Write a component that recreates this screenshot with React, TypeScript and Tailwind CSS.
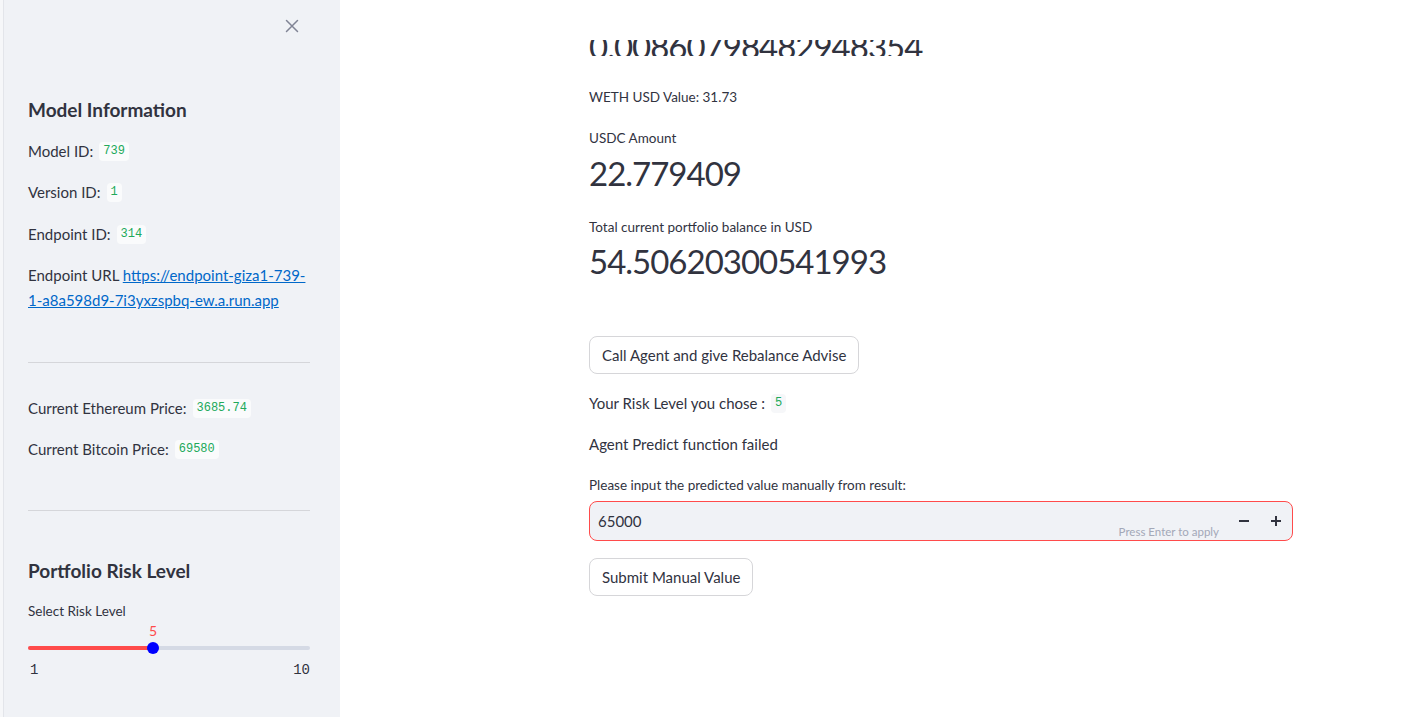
import * as React from 'react';

const font = { fontFamily: 'Lato, "Liberation Sans", sans-serif' };

function Code({ children, light }: { children: React.ReactNode; light?: boolean }) {
  return (
    <code
      className={`ml-1.5 inline-flex h-[19px] items-center rounded px-1 text-[12px] text-[#21a95a] ${light ? 'bg-[#fafbfc]' : 'bg-[#f6f7f9]'}`}
      style={{ fontFamily: '"Liberation Mono", monospace' }}
    >
      {children}
    </code>
  );
}

function Sidebar() {
  return (
    <aside className="flex h-[717px] w-[340px] shrink-0 border-l-[3px] border-[#f6f7f9] bg-[#f0f2f6] text-[#31333f]">
      <div className="w-px bg-[#e3e5ea]" />
      <div className="flex flex-1 flex-col pl-[24px] pr-[30px]">
        <div className="flex h-[52px] items-center justify-end pr-[11px]">
          <svg width="14" height="14" viewBox="0 0 14 14" className="text-[#808495]">
            <path d="M1.5 1.5 L12.5 12.5 M12.5 1.5 L1.5 12.5" stroke="currentColor" strokeWidth="1.5" strokeLinecap="round" />
          </svg>
        </div>
        <h2 className="mt-[44px] flex h-[28px] items-center text-[19px] font-bold">Model Information</h2>
        <div className="mt-[15px] flex h-[24px] items-center text-[15px]">Model ID: <Code light>739</Code></div>
        <div className="mt-[17px] flex h-[24px] items-center text-[15px]">Version ID: <Code light>1</Code></div>
        <div className="mt-[18px] flex h-[24px] items-center text-[15px]">Endpoint ID: <Code light>314</Code></div>
        <p className="mt-[17px] text-[15px] leading-[25px]">
          Endpoint URL{' '}
          <a href="#" className="text-[#0068c9] underline">https://endpoint-giza1-739-1-a8a598d9-7i3yxzspbq-ew.a.run.app</a>
        </p>
        <hr className="mt-[49px] border-t border-[#d5d6da]" />
        <div className="mt-[33px] flex h-[24px] items-center text-[15px]">Current Ethereum Price: <Code light>3685.74</Code></div>
        <div className="mt-[17px] flex h-[24px] items-center text-[15px]">Current Bitcoin Price: <Code light>69580</Code></div>
        <hr className="mt-[49px] border-t border-[#d5d6da]" />
        <h2 className="mt-[46px] flex h-[28px] items-center text-[19px] font-bold">Portfolio Risk Level</h2>
        <div className="mt-[16px] flex h-[20px] items-center text-[13.5px]">Select Risk Level</div>
        <div className="relative mt-[2px] h-[39px]">
          <span className="absolute left-[121px] top-0 text-[14px] leading-[16px] text-[#ff4b4b]">5</span>
          <div className="absolute left-0 right-0 top-[23px] flex h-[4px] rounded-full bg-[#d5dae5]">
            <div className="h-full w-[125px] rounded-full bg-[#ff4b4b]" />
          </div>
          <div className="absolute left-[119px] top-[19px] h-[12px] w-[12px] rounded-full bg-[#0000ff]" />
        </div>
        <div
          className="flex h-[16px] items-center justify-between pl-[2px] text-[14px]"
          style={{ fontFamily: '"Liberation Mono", monospace' }}
        >
          <span>1</span>
          <span>10</span>
        </div>
      </div>
    </aside>
  );
}

function Btn({ children }: { children: React.ReactNode }) {
  return (
    <button className="flex h-[38px] items-center self-start rounded-lg border border-[#d6d6d9] bg-white px-3 text-[15px] text-[#31333f]">
      {children}
    </button>
  );
}

function Main() {
  return (
    <main className="flex flex-1 flex-col overflow-hidden bg-white text-[#31333f]">
      <div className="h-[40px] shrink-0" />
      <div className="flex flex-col px-[249px] pr-[121px]">
        <div className="relative h-[16px] overflow-hidden">
          <div className="absolute bottom-[-10px] left-0 text-[33px] leading-[40px] tracking-[-1px]">0.00860798482948354</div>
        </div>
        <div className="mt-[31px] flex h-[20px] items-center text-[13.5px]">WETH USD Value: 31.73</div>
        <div className="mt-[21px] flex h-[20px] items-center text-[13.5px]">USDC Amount</div>
        <div className="mt-[4px] flex h-[44px] items-center text-[33px] tracking-[-1px]">22.779409</div>
        <div className="mt-[21px] flex h-[20px] items-center text-[13.5px]">Total current portfolio balance in USD</div>
        <div className="mt-[3px] flex h-[44px] items-center text-[33px] tracking-[-1px]">54.50620300541993</div>
        <div className="mt-[52px] flex">
          <Btn>Call Agent and give Rebalance Advise</Btn>
        </div>
        <div className="mt-[17px] flex h-[24px] items-center text-[15px]">Your Risk Level you chose : <Code>5</Code></div>
        <div className="mt-[17px] flex h-[24px] items-center text-[15px]">Agent Predict function failed</div>
        <div className="mt-[19px] flex h-[20px] items-center text-[13.5px]">Please input the predicted value manually from result:</div>
        <div className="mt-[6px] flex h-[40px] items-stretch rounded-lg border border-[#ff4b4b] bg-[#f0f2f6]">
          <div className="flex flex-1 items-center pl-[8px] text-[15px]">65000</div>
          <div className="flex items-end pb-[1px] pr-[9px] text-[11.5px] leading-[14px] text-[#a3a8b8]">Press Enter to apply</div>
          <div className="flex w-[32px] items-center justify-center">
            <svg width="10" height="10" viewBox="0 0 10 10"><path d="M0 5 H10" stroke="#31333f" strokeWidth="2" /></svg>
          </div>
          <div className="flex w-[32px] items-center justify-center">
            <svg width="10" height="10" viewBox="0 0 10 10"><path d="M0 5 H10 M5 0 V10" stroke="#31333f" strokeWidth="2" /></svg>
          </div>
        </div>
        <div className="mt-[17px] flex">
          <Btn>Submit Manual Value</Btn>
        </div>
      </div>
    </main>
  );
}

export default function App() {
  return (
    <div className="flex h-[717px] w-[1414px] overflow-hidden" style={font}>
      <Sidebar />
      <Main />
    </div>
  );
}
